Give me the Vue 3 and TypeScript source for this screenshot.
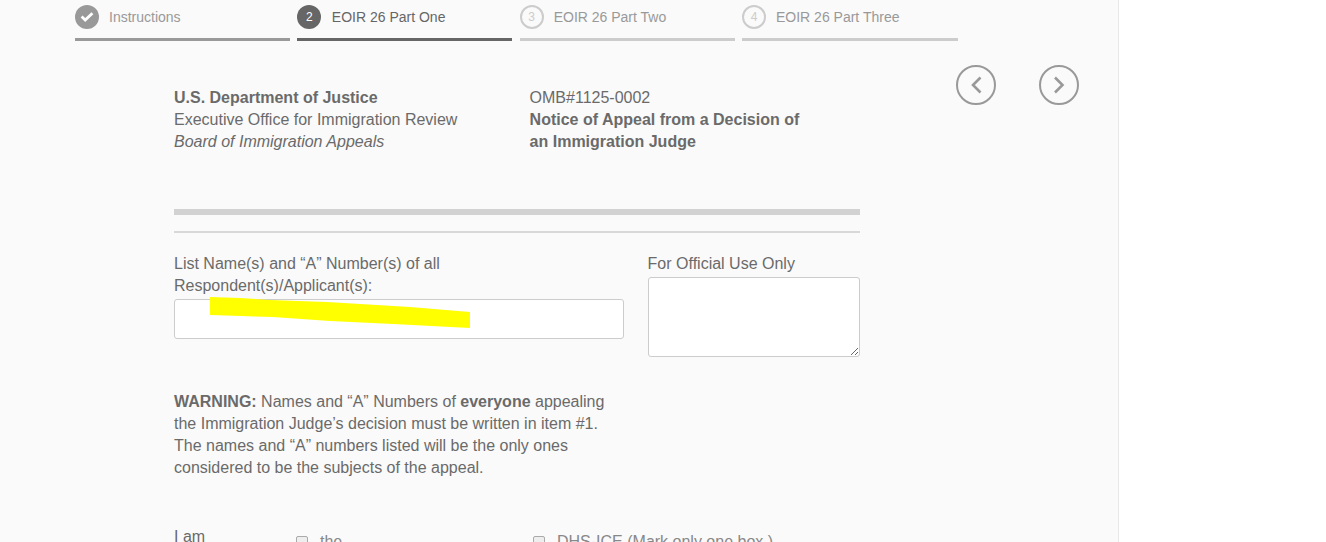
<script setup lang="ts">
interface Step { label: string; mark: string; state: string }
const steps: Step[] = [
  { label: 'Instructions', mark: '', state: 'done' },
  { label: 'EOIR 26 Part One', mark: '2', state: 'active' },
  { label: 'EOIR 26 Part Two', mark: '3', state: 'todo' },
  { label: 'EOIR 26 Part Three', mark: '4', state: 'todo' },
]
</script>

<template>
  <div class="page">
    <main class="main">
      <ol class="steps">
        <li v-for="s in steps" :key="s.label" class="step" :class="s.state">
          <span class="head">
            <span class="mark">
              <svg v-if="s.state === 'done'" width="14" height="12" viewBox="0 0 14 12">
                <path d="M1.6 5.6 5.2 9 12.4 2.2" fill="none" stroke="#fff" stroke-width="2.8" />
              </svg>
              <template v-else>{{ s.mark }}</template>
            </span>
            <span class="label">{{ s.label }}</span>
          </span>
          <span class="bar"></span>
        </li>
      </ol>

      <div class="pager">
        <button class="round" aria-label="Previous">
          <svg width="36" height="36" viewBox="0 0 36 36"><path d="M22.5 10.5 15 18 22.5 25.5" fill="none" stroke="#999" stroke-width="2.6" /></svg>
        </button>
        <button class="round" aria-label="Next">
          <svg width="36" height="36" viewBox="0 0 36 36"><path d="M14 10.5 21.5 18 14 25.5" fill="none" stroke="#999" stroke-width="2.6" /></svg>
        </button>
      </div>

      <section class="form">
        <header class="letterhead">
          <div class="lh-left">
            <strong>U.S. Department of Justice</strong><br />
            Executive Office for Immigration Review<br />
            <em>Board of Immigration Appeals</em>
          </div>
          <div class="lh-right">
            OMB#1125-0002<br />
            <strong>Notice of Appeal from a Decision of<br />an Immigration Judge</strong>
          </div>
        </header>

        <div class="rule-thick"></div>
        <div class="rule-thin"></div>

        <div class="fields">
          <div class="names">
            <label class="lbl">List Name(s) and “A” Number(s) of all Respondent(s)/Applicant(s):</label>
            <input class="input" type="text" />
            <svg class="marker" width="260" height="32" viewBox="0 0 260 32">
              <path d="M0 0 30 1 60 3 117 5 200 10 260 15 260 31 183 27 120 24 63 20 0 18Z" fill="#ffff00" />
            </svg>
          </div>
          <div class="official">
            <label class="lbl">For Official Use Only</label>
            <textarea class="area"></textarea>
          </div>
        </div>

        <p class="warning">
          <strong>WARNING:</strong> Names and “A” Numbers of <strong>everyone</strong> appealing
          the Immigration Judge’s decision must be written in item #1.
          The names and “A” numbers listed will be the only ones
          considered to be the subjects of the appeal.
        </p>

        <div class="iam">
          <span class="iam-label">I am</span>
          <label class="opt opt-one"><input type="checkbox" class="cb" /> the</label>
          <label class="opt"><input type="checkbox" class="cb" /> DHS-ICE (Mark only one box.)</label>
        </div>
      </section>
    </main>
    <aside class="side"></aside>
  </div>
</template>

<style>
html, body { margin: 0; overflow: hidden; }
</style>

<style scoped>
.page {
  display: flex;
  width: 1326px;
  height: 542px;
  overflow: hidden;
  font-family: "Liberation Sans", Arial, sans-serif;
  color: #6a6a6a;
}
.main {
  position: relative;
  box-sizing: border-box;
  width: 1119px;
  background: #fafafa;
  border-right: 1px solid #e8e8e8;
  padding: 5px 0 0 75px;
}
.side { flex: 1; background: #fff; }
.steps {
  display: grid;
  grid-template-columns: repeat(3, 215px) 216px;
  column-gap: 7.33px;
  margin: 0;
  padding: 0;
  list-style: none;
}
.step { display: flex; flex-direction: column; }
.head { display: flex; align-items: center; height: 24px; }
.mark {
  box-sizing: border-box;
  width: 24px;
  height: 24px;
  border-radius: 50%;
  display: flex;
  align-items: center;
  justify-content: center;
  font-size: 12px;
  flex: none;
}
.label { font-size: 14px; margin-left: 10px; }
.bar { height: 3px; margin-top: 9px; }
.done .mark { background: #999; }
.done .label { color: #999; }
.done .bar { background: #999; }
.active .mark { background: #666; color: #fff; }
.active .label { color: #666; margin-left: 10.5px; }
.active .bar { background: #666; }
.todo .mark { border: 2px solid #ccc; color: #ccc; }
.todo .label { color: #999; }
.todo .bar { background: #ccc; }

.pager {
  position: absolute;
  left: 956px;
  top: 65px;
  display: flex;
  gap: 43px;
}
.round {
  box-sizing: border-box;
  width: 40px;
  height: 40px;
  padding: 0;
  margin: 0;
  border: 2px solid #999;
  border-radius: 50%;
  background: transparent;
  display: flex;
  align-items: center;
  justify-content: center;
}
.round svg { flex: none; }

.form {
  width: 686px;
  margin: 46px 0 0 99px;
  font-size: 16px;
  line-height: 22px;
}
.letterhead { display: flex; height: 122px; }
.lh-left { width: 355.6px; }
.rule-thick { height: 6px; background: #d2d2d2; }
.rule-thin { height: 2px; background: #d8d8d8; margin-top: 16px; }
.fields { display: flex; gap: 23.6px; margin-top: 20px; }
.names { position: relative; width: 450px; }
.lbl { display: block; }
.names .lbl { width: 300px; height: 46px; }
.input {
  display: block;
  box-sizing: border-box;
  width: 450px;
  height: 40px;
  background: #fff;
  border: 1px solid #ccc;
  border-radius: 3px;
}
.marker { position: absolute; left: 36px; top: 44px; }
.official { width: 212.4px; }
.official .lbl { height: 24px; }
.area {
  display: block;
  box-sizing: border-box;
  width: 212px;
  height: 80px;
  background: #fff;
  border: 1px solid #ccc;
  border-radius: 3px;
  margin: 0;
  padding: 0;
}
.warning { width: 450px; margin: 34px 0 0; }
.iam { display: flex; align-items: flex-start; margin-top: 47px; }
.iam-label { width: 122px; }
.opt {
  display: flex;
  align-items: flex-start;
  gap: 12px;
  height: 22px;
  margin-top: 5px;
  color: #888;
}
.opt-one { width: 237px; }
.cb {
  appearance: none;
  box-sizing: border-box;
  width: 12px;
  height: 12px;
  margin: 5px 0 0;
  flex: none;
  background: #eee;
  border: 1px solid #aaa;
  border-radius: 2px;
}
</style>
